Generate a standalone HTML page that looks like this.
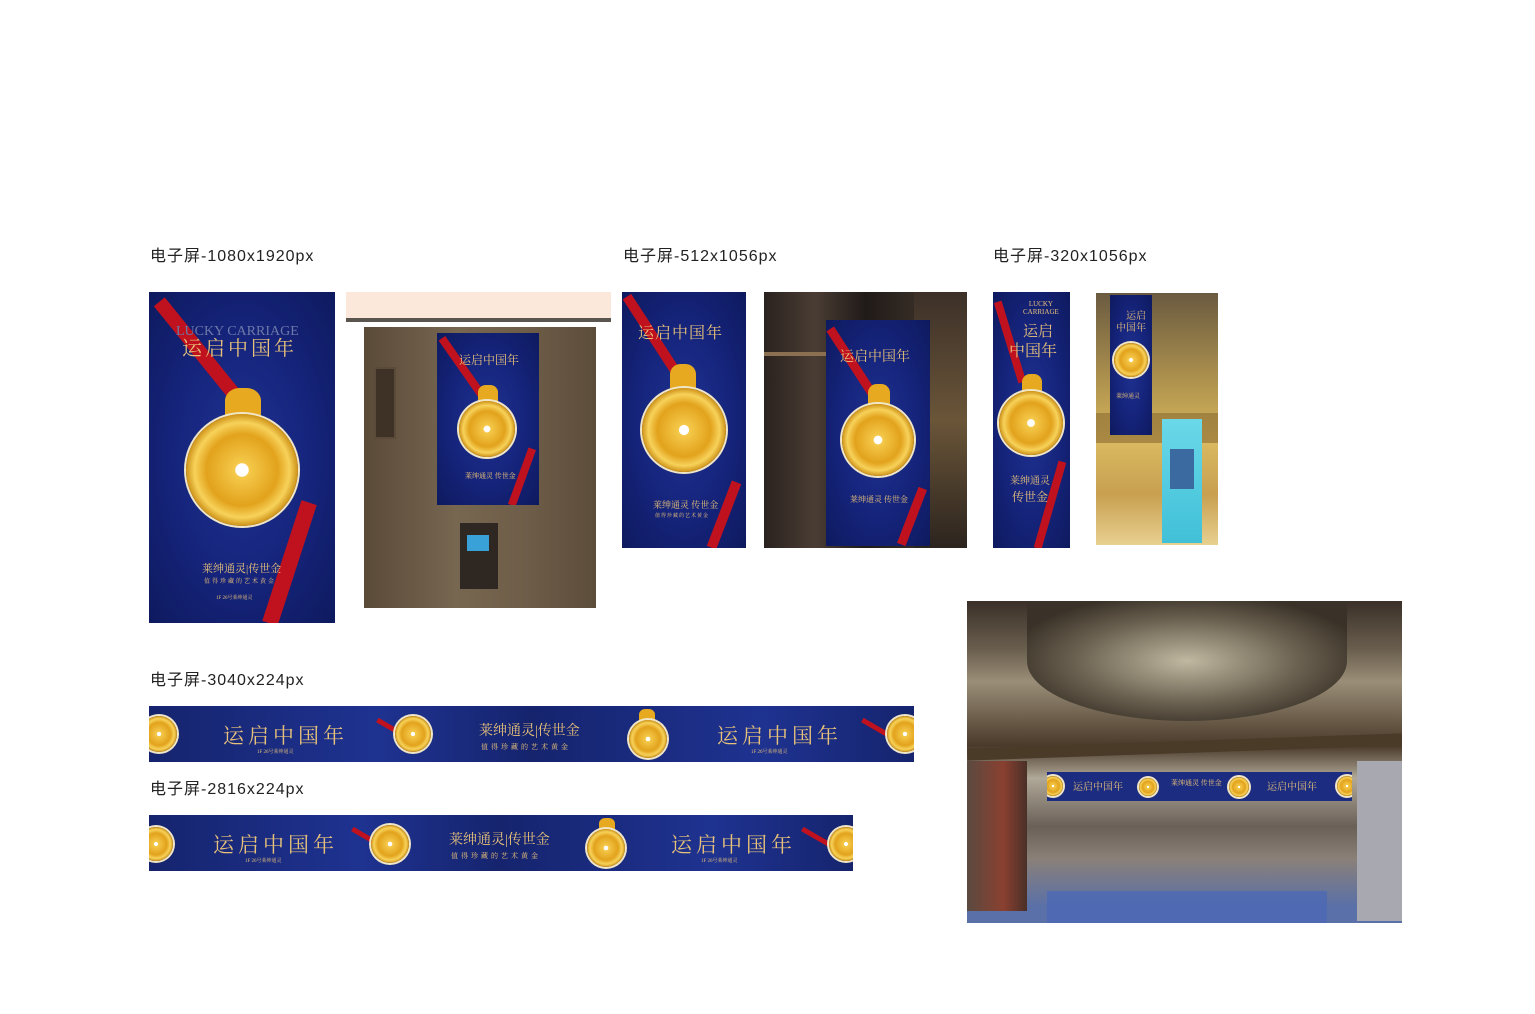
<!DOCTYPE html>
<html><head><meta charset="utf-8"><style>
body{margin:0;background:#fff;width:1535px;height:1014px;position:relative;overflow:hidden;font-family:"Liberation Sans","Noto Sans CJK SC",sans-serif}
.a{position:absolute}
.lbl{position:absolute;font-size:16px;color:#222;letter-spacing:1px;line-height:16px}
.p{position:absolute;background:radial-gradient(ellipse at 50% 50%,#1f3393 0%,#15237a 55%,#0e1a5e 100%);overflow:hidden}
.med{position:absolute;border-radius:50%;background:radial-gradient(circle,#fff 0 8%,#f5c94a 9%,#e2a21c 45%,#f7d25a 60%,#c98a10 72%,#e8e8f0 74%,#d9a52a 80%);box-shadow:0 0 0 2px #f0e6c8}
.crown{position:absolute;background:#e6a91f;border-radius:40% 40% 10% 10%}
.rib{position:absolute;background:#c0121e;transform-origin:center}
.t{position:absolute;color:#e8c27a;font-family:"Liberation Serif","Noto Serif CJK SC",serif;white-space:nowrap}
.ph{position:absolute;overflow:hidden}
</style></head><body>

<div class="lbl" style="left:150px;top:249px">电子屏-1080x1920px</div>
<div class="lbl" style="left:623px;top:249px">电子屏-512x1056px</div>
<div class="lbl" style="left:993px;top:249px">电子屏-320x1056px</div>
<div class="lbl" style="left:150px;top:673px">电子屏-3040x224px</div>
<div class="lbl" style="left:150px;top:782px">电子屏-2816x224px</div>

<!-- Poster 1 -->
<div class="p" style="left:149px;top:292px;width:186px;height:331px">
 <div class="rib" style="left:-16px;top:58px;width:142px;height:14px;transform:rotate(51deg)"></div>
 <div class="rib" style="left:77px;top:263px;width:127px;height:16px;transform:rotate(108deg)"></div>
 <div class="t" style="left:27px;top:32px;font-size:14px;color:#6d79a8">LUCKY CARRIAGE</div>
 <div class="t" style="left:33px;top:40px;font-size:20px;letter-spacing:3px">运启中国年</div>
 <div class="crown" style="left:76px;top:96px;width:36px;height:32px"></div>
 <div class="med" style="left:37px;top:122px;width:112px;height:112px"></div>
 <div class="t" style="left:53px;top:268px;font-size:11px">莱绅通灵|传世金</div>
 <div class="t" style="left:55px;top:284px;font-size:6px;letter-spacing:2px">值得珍藏的艺术黄金</div>
 <div class="t" style="left:67px;top:302px;font-size:5px">1F 26号莱绅通灵</div>
</div>

<!-- Photo 1 -->
<div class="a" style="left:346px;top:292px;width:265px;height:26px;background:#fbe8da"></div>
<div class="a" style="left:346px;top:318px;width:265px;height:4px;background:#5b5550"></div>
<div class="ph" style="left:364px;top:327px;width:232px;height:281px;background:linear-gradient(90deg,#5a4a38,#776650 40%,#6e5d48 70%,#5c4c3a)">
 <div class="a" style="left:10px;top:40px;width:18px;height:68px;background:#3e3125;border:2px solid #5a4a3a"></div>
 <div class="p" style="left:73px;top:6px;width:102px;height:172px">
  <div class="rib" style="left:-10px;top:30px;width:70px;height:8px;transform:rotate(55deg)"></div>
  <div class="rib" style="left:55px;top:140px;width:60px;height:8px;transform:rotate(110deg)"></div>
  <div class="t" style="left:22px;top:18px;font-size:12px">运启中国年</div>
  <div class="crown" style="left:41px;top:52px;width:20px;height:18px"></div>
  <div class="med" style="left:22px;top:68px;width:56px;height:56px"></div>
  <div class="t" style="left:28px;top:138px;font-size:7px">莱绅通灵 传世金</div>
 </div>
 <div class="a" style="left:96px;top:196px;width:38px;height:66px;background:#2f2822"></div>
 <div class="a" style="left:103px;top:208px;width:22px;height:16px;background:#3aa0d8"></div>
</div>

<!-- Poster 2 -->
<div class="p" style="left:622px;top:292px;width:124px;height:256px">
 <div class="rib" style="left:-18px;top:42px;width:101px;height:10px;transform:rotate(57deg)"></div>
 <div class="rib" style="left:67px;top:218px;width:70px;height:10px;transform:rotate(111deg)"></div>
 <div class="t" style="left:16px;top:28px;font-size:16px;letter-spacing:1px">运启中国年</div>
 <div class="crown" style="left:48px;top:72px;width:26px;height:26px"></div>
 <div class="med" style="left:20px;top:96px;width:84px;height:84px"></div>
 <div class="t" style="left:31px;top:206px;font-size:9px">莱绅通灵 传世金</div>
 <div class="t" style="left:33px;top:220px;font-size:5px;letter-spacing:1px">值得珍藏的艺术黄金</div>
</div>

<!-- Photo 2 -->
<div class="ph" style="left:764px;top:292px;width:203px;height:256px;background:linear-gradient(90deg,#2a221e,#4a3d34 25%,#201a18 50%,#3a3028 80%,#5a4a3c)">
 <div class="a" style="left:0;top:60px;width:203px;height:4px;background:#8a7050"></div>
 <div class="a" style="left:150px;top:0;width:53px;height:256px;background:linear-gradient(180deg,#3c3028,#6a5538,#2c241e)"></div>
 <div class="p" style="left:62px;top:28px;width:104px;height:226px">
  <div class="rib" style="left:-14px;top:38px;width:80px;height:9px;transform:rotate(57deg)"></div>
  <div class="rib" style="left:56px;top:192px;width:60px;height:9px;transform:rotate(111deg)"></div>
  <div class="t" style="left:14px;top:26px;font-size:14px">运启中国年</div>
  <div class="crown" style="left:42px;top:64px;width:22px;height:22px"></div>
  <div class="med" style="left:16px;top:84px;width:72px;height:72px"></div>
  <div class="t" style="left:24px;top:174px;font-size:8px">莱绅通灵 传世金</div>
 </div>
</div>

<!-- Poster 3 -->
<div class="p" style="left:993px;top:292px;width:77px;height:256px">
 <div class="rib" style="left:-25px;top:46px;width:84px;height:8px;transform:rotate(73deg)"></div>
 <div class="rib" style="left:12px;top:209px;width:90px;height:8px;transform:rotate(106deg)"></div>
 <div class="t" style="left:30px;top:8px;font-size:7px;text-align:center">LUCKY<br>CARRIAGE</div>
 <div class="t" style="left:30px;top:28px;font-size:15px">运启</div>
 <div class="t" style="left:16px;top:46px;font-size:16px">中国年</div>
 <div class="crown" style="left:29px;top:82px;width:20px;height:20px"></div>
 <div class="med" style="left:6px;top:99px;width:64px;height:64px"></div>
 <div class="t" style="left:17px;top:180px;font-size:10px">莱绅通灵</div>
 <div class="t" style="left:19px;top:196px;font-size:12px">传世金</div>
</div>

<!-- Photo 3 -->
<div class="ph" style="left:1096px;top:293px;width:122px;height:252px;background:linear-gradient(180deg,#6a5a40,#b89a50 40%,#d8b860 60%,#c8a050 80%,#e8d090)">
 <div class="a" style="left:0;top:120px;width:122px;height:30px;background:#8a6a30;opacity:.6"></div>
 <div class="p" style="left:14px;top:2px;width:42px;height:140px">
  <div class="t" style="left:16px;top:12px;font-size:10px">运启</div>
  <div class="t" style="left:6px;top:24px;font-size:10px">中国年</div>
  <div class="med" style="left:4px;top:48px;width:34px;height:34px"></div>
  <div class="t" style="left:6px;top:96px;font-size:6px">莱绅通灵</div>
 </div>
 <div class="a" style="left:66px;top:126px;width:40px;height:124px;background:linear-gradient(180deg,#6ad8e8,#40c0d8)"></div>
 <div class="a" style="left:74px;top:156px;width:24px;height:40px;background:#3a6aa0"></div>
</div>

<!-- Banner 1 -->
<div class="p" style="left:149px;top:706px;width:765px;height:56px;background:linear-gradient(90deg,#16246e,#1e3290 30%,#16246e 50%,#1e3290 80%,#16246e)">
 <div class="med" style="left:-8px;top:10px;width:36px;height:36px"></div>
 <div class="t" style="left:74px;top:14px;font-size:21px;letter-spacing:4px">运启中国年</div>
 <div class="t" style="left:108px;top:42px;font-size:5px">1F 26号莱绅通灵</div>
 <div class="rib" style="left:225px;top:24px;width:50px;height:5px;transform:rotate(30deg)"></div>
 <div class="med" style="left:246px;top:10px;width:36px;height:36px"></div>
 <div class="t" style="left:330px;top:14px;font-size:14px">莱绅通灵|传世金</div>
 <div class="t" style="left:332px;top:36px;font-size:7px;letter-spacing:3px">值得珍藏的艺术黄金</div>
 <div class="crown" style="left:490px;top:3px;width:16px;height:14px"></div>
 <div class="med" style="left:480px;top:14px;width:38px;height:38px"></div>
 <div class="t" style="left:568px;top:14px;font-size:21px;letter-spacing:4px">运启中国年</div>
 <div class="t" style="left:602px;top:42px;font-size:5px">1F 26号莱绅通灵</div>
 <div class="rib" style="left:710px;top:24px;width:50px;height:5px;transform:rotate(30deg)"></div>
 <div class="med" style="left:738px;top:10px;width:36px;height:36px"></div>
</div>

<!-- Banner 2 -->
<div class="p" style="left:149px;top:815px;width:704px;height:56px;background:linear-gradient(90deg,#16246e,#1e3290 30%,#16246e 50%,#1e3290 80%,#16246e)">
 <div class="med" style="left:-10px;top:12px;width:34px;height:34px"></div>
 <div class="t" style="left:64px;top:14px;font-size:21px;letter-spacing:4px">运启中国年</div>
 <div class="t" style="left:96px;top:42px;font-size:5px">1F 26号莱绅通灵</div>
 <div class="rib" style="left:200px;top:24px;width:50px;height:5px;transform:rotate(30deg)"></div>
 <div class="med" style="left:222px;top:10px;width:38px;height:38px"></div>
 <div class="t" style="left:300px;top:14px;font-size:14px">莱绅通灵|传世金</div>
 <div class="t" style="left:302px;top:36px;font-size:7px;letter-spacing:3px">值得珍藏的艺术黄金</div>
 <div class="crown" style="left:450px;top:3px;width:16px;height:14px"></div>
 <div class="med" style="left:438px;top:14px;width:38px;height:38px"></div>
 <div class="t" style="left:522px;top:14px;font-size:21px;letter-spacing:4px">运启中国年</div>
 <div class="t" style="left:552px;top:42px;font-size:5px">1F 26号莱绅通灵</div>
 <div class="rib" style="left:650px;top:24px;width:50px;height:5px;transform:rotate(30deg)"></div>
 <div class="med" style="left:680px;top:12px;width:34px;height:34px"></div>
</div>

<!-- Big photo -->
<div class="ph" style="left:967px;top:601px;width:435px;height:322px;background:linear-gradient(180deg,#3a3028 0%,#6a5e4e 15%,#9a8e78 25%,#4a3a2a 45%,#b0a898 55%,#6a6058 70%,#8a8078 80%,#5a70a8 95%)">
 <div class="a" style="left:60px;top:0;width:320px;height:120px;border-radius:0 0 50% 50%;background:radial-gradient(ellipse,#c0b8a0 0%,#6a6050 50%,#3a3228 80%)"></div>
 <div class="a" style="left:0;top:140px;width:435px;height:12px;background:#4a3a28;transform:rotate(-2deg)"></div>
 <div class="a" style="left:0;top:160px;width:60px;height:150px;background:linear-gradient(90deg,#5a4a40,#8a4030 60%,#4a3028)"></div>
 <div class="a" style="left:390px;top:160px;width:45px;height:160px;background:#a8a8b0"></div>
 <div class="a" style="left:80px;top:290px;width:280px;height:32px;background:#4a68b8;opacity:.7"></div>
 <div class="p" style="left:80px;top:171px;width:305px;height:29px;background:#1c2c80">
  <div class="med" style="left:-4px;top:4px;width:20px;height:20px"></div>
  <div class="t" style="left:26px;top:6px;font-size:10px">运启中国年</div>
  <div class="med" style="left:92px;top:6px;width:18px;height:18px"></div>
  <div class="t" style="left:124px;top:6px;font-size:7px">莱绅通灵 传世金</div>
  <div class="med" style="left:182px;top:5px;width:20px;height:20px"></div>
  <div class="t" style="left:220px;top:6px;font-size:10px">运启中国年</div>
  <div class="med" style="left:290px;top:4px;width:20px;height:20px"></div>
 </div>
</div>

</body></html>
